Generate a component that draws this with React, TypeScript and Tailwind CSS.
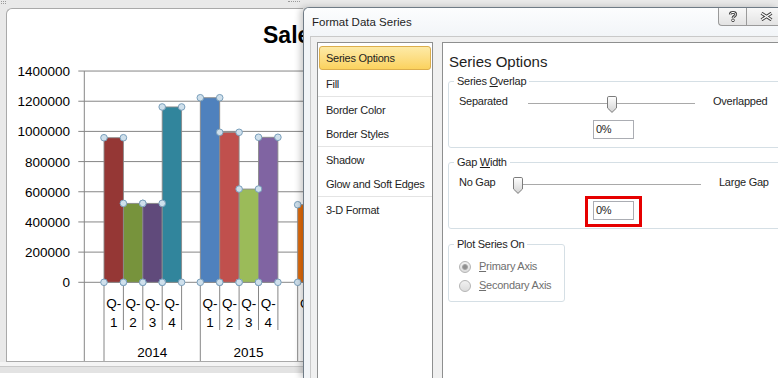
import React from 'react'

// chart geometry, in page pixels
const Y0 = 282.3
const STEP = 30.18
const yOf = (v: number) => Y0 - (v / 200000) * STEP
const CAT_X = [104, 200.3, 297.7]
const SLOT = 19.4

const SERIES: { year: string; bars: [number, string][] }[] = [
  { year: '2014', bars: [[958000, '#953735'], [523000, '#77933c'], [523000, '#604a7b'], [1162000, '#31859c']] },
  { year: '2015', bars: [[1223000, '#4f81bd'], [994000, '#c0504d'], [618000, '#9bbb59'], [961000, '#8064a2']] },
  { year: '2016', bars: [[514000, '#e46c0a']] },
]

const TICKS = [1400000, 1200000, 1000000, 800000, 600000, 400000, 200000, 0]

function Chart() {
  const handles: [number, number][] = []
  SERIES.forEach((s, c) =>
    s.bars.forEach(([v], i) => {
      const x0 = CAT_X[c] + i * SLOT
      const top = yOf(v)
      handles.push([x0, top], [x0 + SLOT, top], [x0, Y0], [x0 + SLOT, Y0])
    }),
  )

  return (
    <svg width={296} height={352} viewBox="7 9 296 352" className="block">
      <text x={263} y={43} fontSize={23} fontWeight="bold" fill="#000">Sales</text>

      {TICKS.map((t) => (
        <g key={t}>
          <line x1={78.3} x2={420} y1={yOf(t)} y2={yOf(t)} stroke="#868686" strokeWidth={1} />
          <text x={70} y={yOf(t) + 5} fontSize={13.5} textAnchor="end" fill="#000">{t}</text>
        </g>
      ))}

      <line x1={84.3} x2={84.3} y1={yOf(1400000)} y2={361} stroke="#868686" />
      {CAT_X.map((x) => (
        <line key={x} x1={x} x2={x} y1={Y0} y2={361} stroke="#868686" />
      ))}
      {CAT_X.map((x) =>
        [1, 2, 3, 4].map((k) => (
          <line key={`${x}-${k}`} x1={x + k * SLOT} x2={x + k * SLOT} y1={Y0} y2={330} stroke="#868686" />
        )),
      )}

      {SERIES.map((s, c) =>
        s.bars.map(([v, color], i) => {
          const x0 = CAT_X[c] + i * SLOT
          return (
            <rect key={`${c}-${i}`} x={x0} y={yOf(v)} width={SLOT} height={Y0 - yOf(v)}
              fill={color} stroke="#8a8a8a" strokeWidth={0.9} />
          )
        }),
      )}

      {handles.map(([x, y], i) => (
        <circle key={i} cx={x} cy={y} r={3.3} fill="#cfe0ec" stroke="#7a9fbb" strokeWidth={1} />
      ))}

      {SERIES.map((s, c) => (
        <g key={s.year}>
          {[1, 2, 3, 4].map((q, i) => {
            const cx = CAT_X[c] + i * SLOT + SLOT / 2
            return (
              <g key={q}>
                <text x={cx} y={307.5} fontSize={13.5} textAnchor="middle">Q-</text>
                <text x={cx} y={326.5} fontSize={13.5} textAnchor="middle">{q}</text>
              </g>
            )
          })}
          <text x={CAT_X[c] + 48.3} y={356.5} fontSize={13.5} textAnchor="middle">{s.year}</text>
        </g>
      ))}
    </svg>
  )
}

function ChartPane() {
  return (
    <div className="w-[303px] shrink-0 flex flex-col bg-[#e9e9e9]">
      <div className="h-[8px] flex justify-between items-start px-[1px] pt-[1px]">
        <span className="w-[5px] h-[3px] border-t border-b border-dotted border-[#9a9a9a]" />
        <span className="w-[12px] h-[3px] mr-[2px] border-t border-dotted border-[#9a9a9a]" />
      </div>
      <div className="ml-[6px] h-[354px] bg-white border-l border-t border-b border-[#a9a9a9] rounded-tl-[6px] overflow-hidden">
        <Chart />
      </div>
      <div className="h-[5px] bg-[#f4f4f4] border-b border-[#c9c9c9]" />
      <div className="h-[6px] bg-[#e3e3e3]" />
      <div className="flex-1 bg-white" />
    </div>
  )
}

const NAV_GROUPS = [
  ['Series Options', 'Fill'],
  ['Border Color', 'Border Styles'],
  ['Shadow', 'Glow and Soft Edges'],
  ['3-D Format'],
]

function NavPanel() {
  return (
    <div className="w-[116px] shrink-0 bg-white border-l border-t border-r border-[#8e8f8f] text-[11px] tracking-[-0.25px]">
      {NAV_GROUPS.map((g, gi) => (
        <div key={gi} className={gi === 0 ? 'pt-[3px] border-b border-[#e4e4e4]' : gi === 3 ? 'pt-[1px]' : 'pt-[1px] border-b border-[#e4e4e4]'}>
          {g.map((label, i) =>
            label === 'Series Options' ? (
              <div key={label} className="h-[24px] mx-[1px] flex items-center pl-[6px] rounded-[3px] border border-[#dcae4c] bg-gradient-to-b from-[#fdeaa6] to-[#fbd25d]">
                {label}
              </div>
            ) : (
              <div key={label} className={`h-[24px] flex items-center pl-[8px] ${gi === 0 && i === 1 ? 'mt-[2px]' : ''}`}>
                {label}
              </div>
            ),
          )}
        </div>
      ))}
    </div>
  )
}

function Slider({ width, thumb }: { width: number; thumb: number }) {
  return (
    <div className="relative h-[17px] mt-[6px] shrink-0" style={{ width }}>
      <div className="absolute left-0 right-0 top-[7px] h-[2px] border-t border-[#a9a9a9] border-b border-b-white" />
      <svg className="absolute top-0" style={{ left: thumb }} width={10} height={17} viewBox="0 0 10 17">
        <defs>
          <linearGradient id="th" x1="0" y1="0" x2="0" y2="1">
            <stop offset="0" stopColor="#ffffff" />
            <stop offset="1" stopColor="#d2d2d2" />
          </linearGradient>
        </defs>
        <path d="M1.8 0.5 H8.2 Q9.5 0.5 9.5 1.8 V12 L5 16.4 L0.5 12 V1.8 Q0.5 0.5 1.8 0.5 Z" fill="url(#th)" stroke="#7c7c7c" />
      </svg>
    </div>
  )
}

function PctInput() {
  return (
    <div className="w-[41px] h-[19px] border border-[#abadb3] bg-white pl-[2px] text-[11px] leading-[17px]">0%</div>
  )
}

function Radio({ checked, label, u }: { checked?: boolean; label: string; u: number }) {
  return (
    <div className="flex items-center h-[19px] pl-[10px] gap-[8px] text-[#6f6f6f]">
      <div className="w-[12px] h-[12px] rounded-full border border-[#b4b4b4] bg-gradient-to-b from-[#f1f1f1] to-[#dcdcdc] flex items-center justify-center">
        {checked && <div className="w-[6px] h-[6px] rounded-full bg-[#8e8e8e] border border-[#a5a5a5]" />}
      </div>
      <span>
        <span className="underline">{label.slice(0, u)}</span>
        {label.slice(u)}
      </span>
    </div>
  )
}

function OptionsPanel() {
  return (
    <div className="w-[345px] shrink-0 bg-white border-l border-t border-[#8e8f8f] text-[11px] tracking-[-0.25px]">
      <div className="pl-[6px] mt-[9px] text-[15px] leading-[20px] tracking-normal">Series Options</div>

      <fieldset className="ml-[5px] mt-[2px] w-[340px] border border-[#d5dfe5] rounded-[3px] pb-[8px]">
        <legend className="ml-[5px] px-[3px] leading-[14px]">
          Series <span className="underline">O</span>verlap
        </legend>
        <div className="flex items-center h-[20px] mt-[3px] pl-[10px]">
          <span className="w-[69px] shrink-0">Separated</span>
          <Slider width={167} thumb={79} />
          <span className="ml-[18px]">Overlapped</span>
        </div>
        <div className="mt-[9px] ml-[144px]">
          <PctInput />
        </div>
      </fieldset>

      <fieldset className="ml-[5px] mt-[7px] w-[340px] border border-[#d5dfe5] rounded-[3px] pb-[1px]">
        <legend className="ml-[5px] px-[3px] leading-[14px]">
          Gap <span className="underline">W</span>idth
        </legend>
        <div className="flex items-center h-[20px] mt-[3px] pl-[10px]">
          <span className="w-[54px] shrink-0">No Gap</span>
          <Slider width={188} thumb={0} />
          <span className="ml-[18px]">Large Gap</span>
        </div>
        <div className="mt-[4px] ml-[136px] w-fit border-[3px] border-[#e60000] px-[5px] pt-[2px] pb-[4px]">
          <PctInput />
        </div>
      </fieldset>

      <fieldset className="ml-[5px] mt-[8px] w-[117px] border border-[#d5dfe5] rounded-[3px] pb-[6px]">
        <legend className="ml-[5px] px-[3px] leading-[14px]">Plot Series On</legend>
        <div className="mt-[6px]">
          <Radio checked label="Primary Axis" u={1} />
          <Radio label="Secondary Axis" u={1} />
        </div>
      </fieldset>
    </div>
  )
}

function CaptionButton({ kind }: { kind: 'help' | 'close' }) {
  return (
    <div
      className={
        kind === 'help'
          ? 'w-[28px] h-[18px] flex items-center justify-center rounded-bl-[4px] border-l border-b border-[#9a9a9a] bg-gradient-to-b from-[#f8f8f8] to-[#e3e3e3]'
          : 'w-[32px] h-[18px] flex items-center pl-[13px] border-l border-b border-[#9a9a9a] bg-gradient-to-b from-[#f8f8f8] to-[#e3e3e3]'
      }
    >
      {kind === 'help' ? (
        <svg width={10} height={11} viewBox="0 0 10 11">
          <path d="M2.3 3.4 C2.3 0.8 7.7 0.8 7.7 3.4 C7.7 5.3 5 5.2 5 7" fill="none" stroke="#404040" strokeWidth={2.8} />
          <path d="M2.3 3.4 C2.3 0.8 7.7 0.8 7.7 3.4 C7.7 5.3 5 5.2 5 7" fill="none" stroke="#fff" strokeWidth={1} />
          <circle cx={5} cy={9.3} r={1.4} fill="#fff" stroke="#404040" strokeWidth={0.9} />
        </svg>
      ) : (
        <svg width={13} height={9} viewBox="0 0 13 9">
          <path d="M1.5 1.2 L11.5 7.8 M11.5 1.2 L1.5 7.8" stroke="#404040" strokeWidth={3.2} />
          <path d="M1.5 1.2 L11.5 7.8 M11.5 1.2 L1.5 7.8" stroke="#fff" strokeWidth={1.3} />
        </svg>
      )}
    </div>
  )
}

function Dialog() {
  return (
    <div className="flex-1 min-w-0 mt-[7px] flex flex-col border-l border-t border-[#6f7b86] rounded-tl-[6px] bg-[#f1f4f7] overflow-hidden shadow-[-3px_0_6px_rgba(0,0,0,0.2)] z-10">
      <div className="h-[28px] shrink-0 flex items-start justify-between bg-gradient-to-b from-[#fcfdfe] to-[#f2f5f8]">
        <span className="pl-[8px] text-[11.5px] leading-[28px]">Format Data Series</span>
        <div className="flex">
          <CaptionButton kind="help" />
          <CaptionButton kind="close" />
        </div>
      </div>
      <div className="flex-1 min-h-0 ml-[6px] border-l border-t border-[#c9c9c9] bg-[#f0f0f0] pt-[5px] pl-[6px] flex gap-[9px]">
        <NavPanel />
        <OptionsPanel />
      </div>
    </div>
  )
}

export default function App() {
  return (
    <div className="w-[778px] h-[378px] overflow-hidden flex bg-[#e9e9e9] font-['Liberation_Sans',Arial,sans-serif] text-[#1e1e1e]">
      <ChartPane />
      <Dialog />
    </div>
  )
}
